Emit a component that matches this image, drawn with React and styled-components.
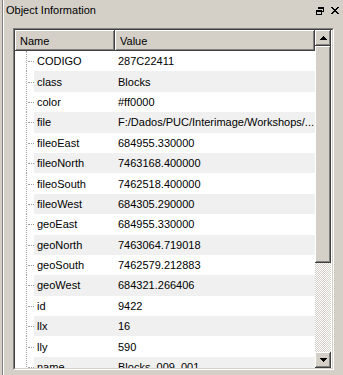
import styled, { createGlobalStyle } from "styled-components";

const GlobalStyle = createGlobalStyle`
  html, body {
    margin: 0;
    padding: 0;
    background: #d4d0c8;
  }
  body {
    font-family: "Liberation Sans", Arial, sans-serif;
    font-size: 11px;
    color: #000;
  }
`;

const raised = `
  background: #d4d0c8;
  box-shadow: inset -1px -1px #404040, inset 1px 1px #ffffff,
    inset -2px -2px #808080, inset 2px 2px #d4d0c8;
`;

const Panel = styled.div`
  margin-left: 2px;
  height: 375px;
  box-sizing: border-box;
  border-left: 1px solid #808080;
  box-shadow: inset 1px 0 #ffffff;
  display: flex;
  flex-direction: column;
  overflow: hidden;
`;

const TitleBar = styled.div`
  height: 20px;
  display: flex;
  align-items: center;
  justify-content: space-between;
  padding: 0 4px 0 3px;
`;

const Title = styled.span`
  font-size: 11px;
  line-height: 20px;
`;

const TitleButtons = styled.div`
  display: flex;
  gap: 7px;
  align-items: center;
  padding-top: 1px;
`;

const ListBox = styled.div`
  margin: 8px 0 0 10px;
  width: 321px;
  height: 342px;
  box-sizing: border-box;
  border: 1px solid;
  border-color: #808080 #ffffff #ffffff #808080;
`;

const Frame = styled.div`
  height: 100%;
  box-sizing: border-box;
  border: 1px solid;
  border-color: #404040 #d4d0c8 #d4d0c8 #404040;
  display: grid;
  grid-template-columns: 300px 16px;
  background: #fff;
`;

const Table = styled.div`
  display: flex;
  flex-direction: column;
  overflow: hidden;
`;

const Header = styled.div`
  display: grid;
  grid-template-columns: 100px 200px;
  height: 21px;
  flex-shrink: 0;
`;

const HeaderCell = styled.div`
  ${raised}
  display: flex;
  align-items: center;
  padding-left: 5px;
  padding-top: 1px;
`;

const Body = styled.div`
  flex: 1;
  overflow: hidden;
`;

const Row = styled.div`
  display: grid;
  grid-template-columns: 19px 81px 200px;
  height: 20.4px;
  align-items: stretch;
`;

const Tree = styled.div`
  position: relative;
  background: #fff;
  &::before {
    content: "";
    position: absolute;
    left: 11px;
    top: ${(p) => (p.$first ? "0" : "-1px")};
    bottom: 0;
    border-left: 1px dotted #a0a0a0;
  }
  &::after {
    content: "";
    position: absolute;
    left: 13px;
    width: 6px;
    top: 50%;
    border-top: 1px dotted #a0a0a0;
  }
`;

const Cell = styled.div`
  background: ${(p) => (p.$alt ? "#f0f0f0" : "#ffffff")};
  display: flex;
  align-items: center;
  padding-left: ${(p) => p.$pad}px;
  white-space: nowrap;
  overflow: hidden;
`;

const ScrollBar = styled.div`
  display: flex;
  flex-direction: column;
  background: repeating-conic-gradient(#ffffff 0 25%, #d4d0c8 0 50%) 0 0 / 2px 2px;
`;

const ArrowButton = styled.div`
  ${raised}
  height: 16px;
  flex-shrink: 0;
  display: flex;
  align-items: center;
  justify-content: center;
`;

const Thumb = styled.div`
  ${raised}
  height: 217px;
  flex-shrink: 0;
`;

const Track = styled.div`
  flex: 1;
`;

const rows = [
  ["CODIGO", "287C22411"],
  ["class", "Blocks"],
  ["color", "#ff0000"],
  ["file", "F:/Dados/PUC/Interimage/Workshops/..."],
  ["fileoEast", "684955.330000"],
  ["fileoNorth", "7463168.400000"],
  ["fileoSouth", "7462518.400000"],
  ["fileoWest", "684305.290000"],
  ["geoEast", "684955.330000"],
  ["geoNorth", "7463064.719018"],
  ["geoSouth", "7462579.212883"],
  ["geoWest", "684321.266406"],
  ["id", "9422"],
  ["llx", "16"],
  ["lly", "590"],
  ["name", "Blocks_009_001"],
];

const RestoreIcon = () => (
  <svg width="8" height="8" viewBox="0 0 8 8" shapeRendering="crispEdges">
    <path d="M2 0h6v2H2zM7 2h1v3H7zM6 4h1v1H6z" fill="#000" />
    <path d="M0 3h6v2H0zM0 5h1v3H0zM5 5h1v3H5zM1 7h4v1H1z" fill="#000" />
  </svg>
);

const CloseIcon = () => (
  <svg width="8" height="7" viewBox="0 0 8 7" shapeRendering="crispEdges">
    <path d="M0 0h2v1H0zM6 0h2v1H6zM1 1h2v1H1zM5 1h2v1H5zM2 2h4v1H2zM3 3h2v1H3zM2 4h4v1H2zM1 5h2v1H1zM5 5h2v1H5zM0 6h2v1H0zM6 6h2v1H6z" fill="#000" />
  </svg>
);

const Arrow = ({ down }) => (
  <svg width="7" height="4" viewBox="0 0 7 4" shapeRendering="crispEdges">
    {down ? (
      <path d="M0 0h7v1H0zM1 1h5v1H1zM2 2h3v1H2zM3 3h1v1H3z" fill="#000" />
    ) : (
      <path d="M3 0h1v1H3zM2 1h3v1H2zM1 2h5v1H1zM0 3h7v1H0z" fill="#000" />
    )}
  </svg>
);

const App = () => {
  return (
    <>
      <GlobalStyle />
      <Panel>
        <TitleBar>
          <Title>Object Information</Title>
          <TitleButtons>
            <RestoreIcon />
            <CloseIcon />
          </TitleButtons>
        </TitleBar>
        <ListBox>
          <Frame>
            <Table>
              <Header>
                <HeaderCell>Name</HeaderCell>
                <HeaderCell>Value</HeaderCell>
              </Header>
              <Body>
                {rows.map(([name, value], i) => (
                  <Row key={name}>
                    <Tree $first={i === 0} />
                    <Cell $alt={i % 2 === 1} $pad={3}>
                      {name}
                    </Cell>
                    <Cell $alt={i % 2 === 1} $pad={3}>
                      {value}
                    </Cell>
                  </Row>
                ))}
              </Body>
            </Table>
            <ScrollBar>
              <ArrowButton>
                <Arrow />
              </ArrowButton>
              <Thumb />
              <Track />
              <ArrowButton>
                <Arrow down />
              </ArrowButton>
            </ScrollBar>
          </Frame>
        </ListBox>
      </Panel>
    </>
  );
};

export default App;
